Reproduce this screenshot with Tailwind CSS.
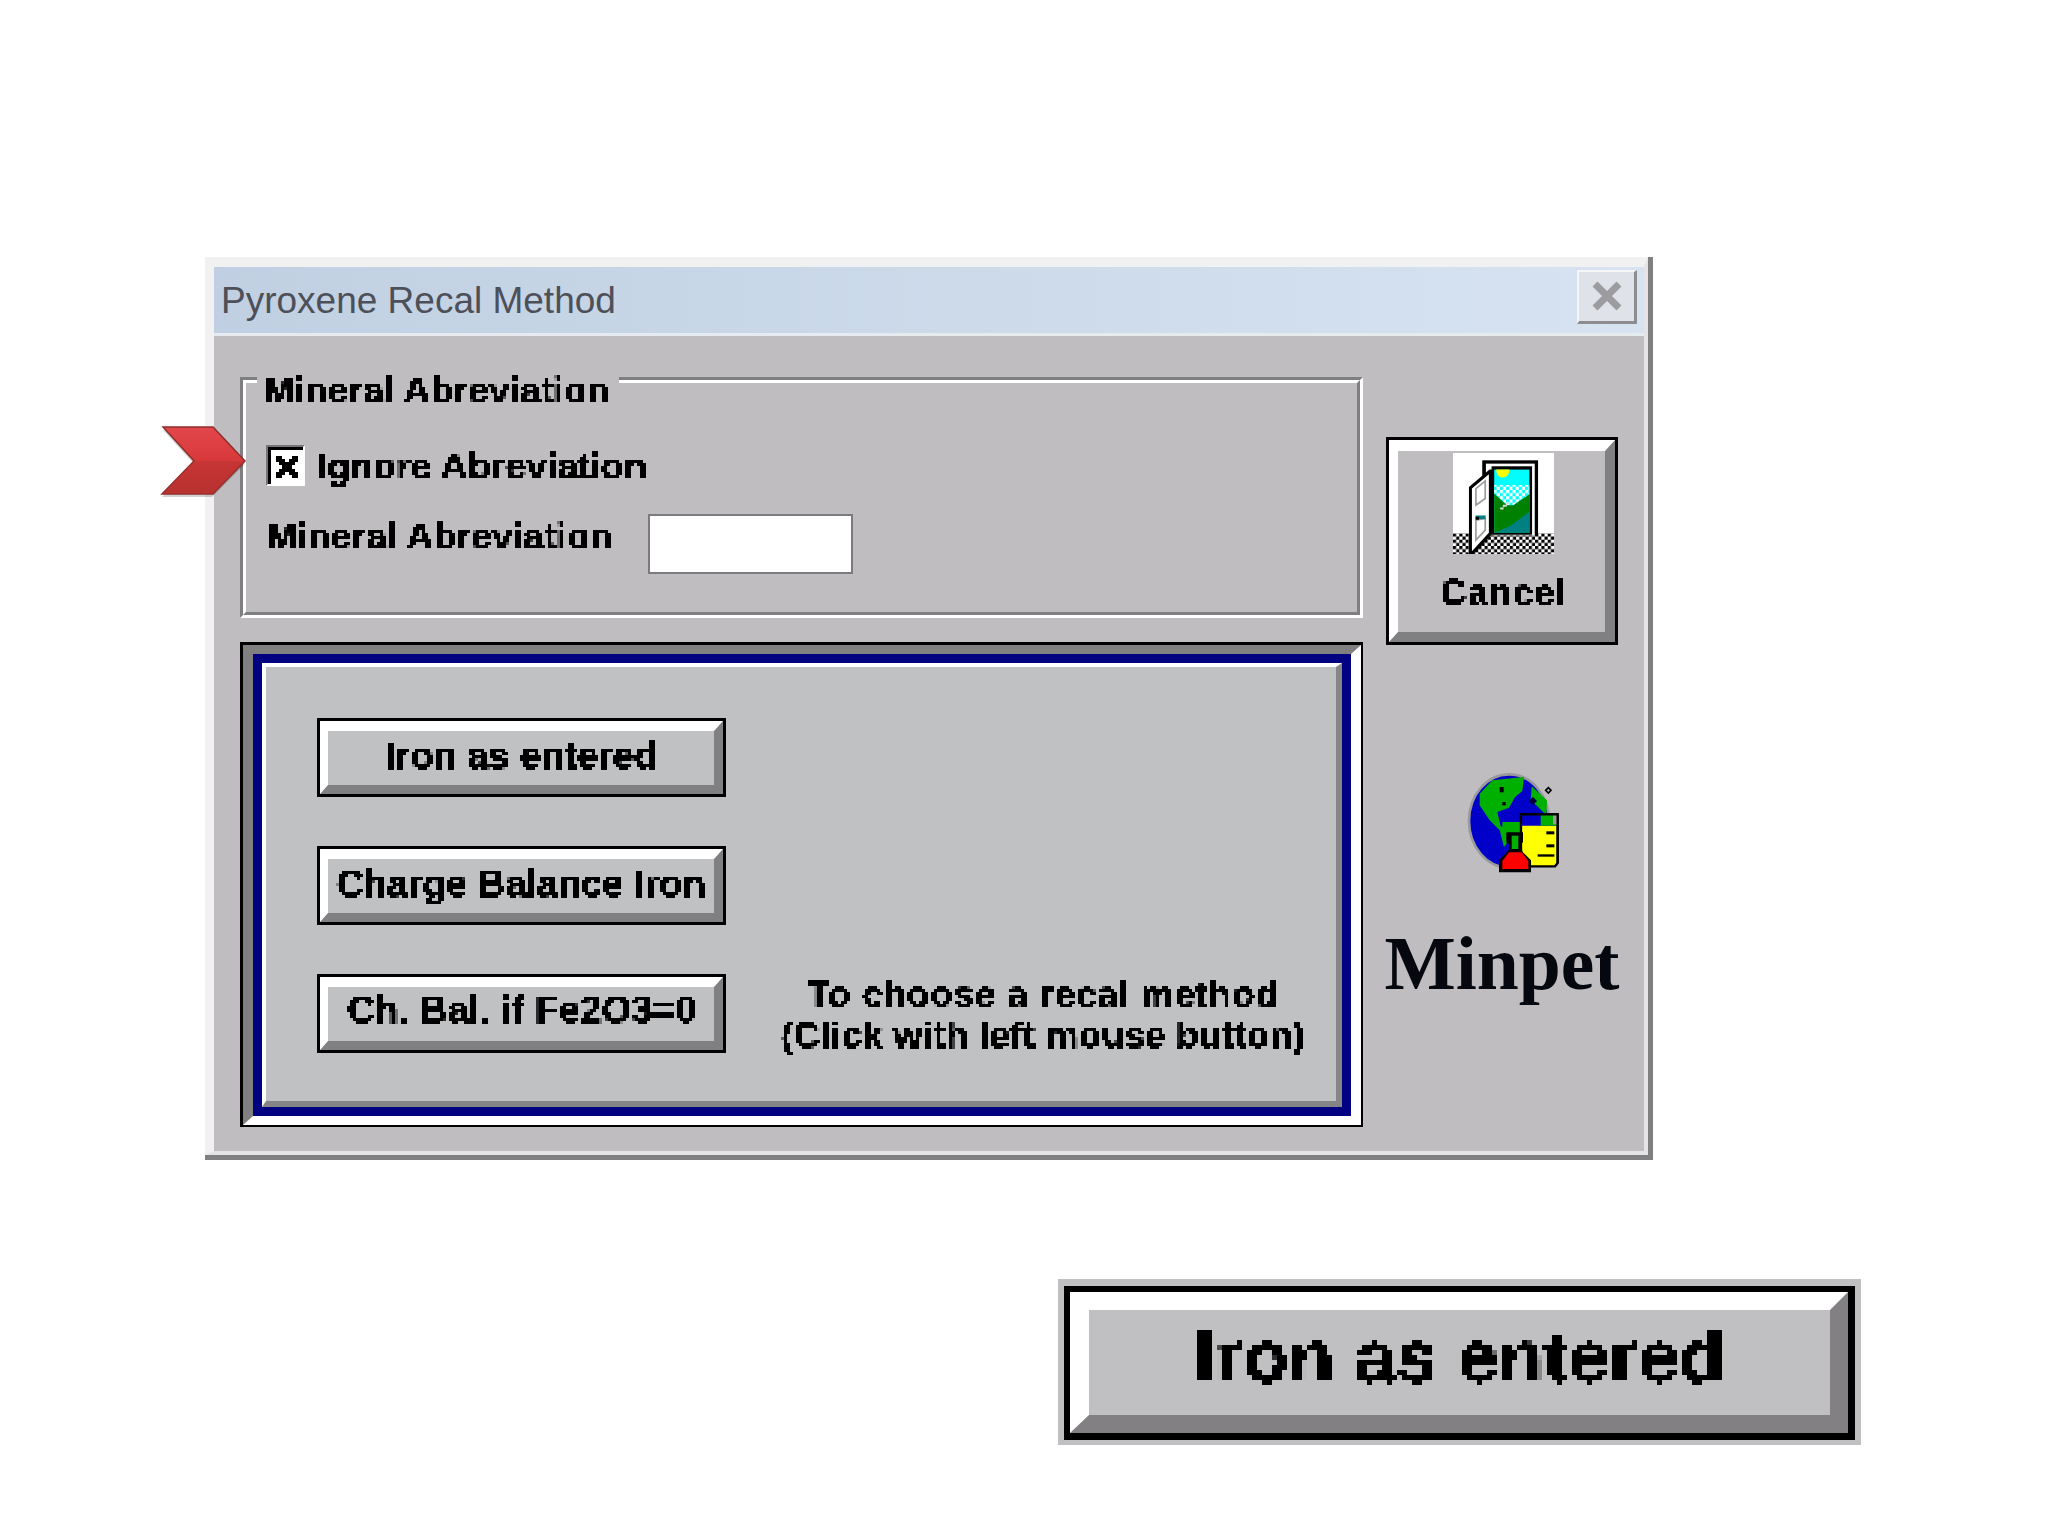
<!DOCTYPE html>
<html>
<head>
<meta charset="utf-8">
<title>Pyroxene Recal Method</title>
<script src="https://cdn.jsdelivr.net/npm/@tailwindcss/browser@4"></script>
</head>
<body class="bg-white">
<svg width="0" height="0" class="absolute">
  <defs>
    <filter id="px3" x="0" y="0" width="100%" height="100%" color-interpolation-filters="sRGB">
      <feFlood x="1" y="1" width="1" height="1" flood-color="#000"/>
      <feComposite width="3" height="3"/>
      <feTile result="a"/>
      <feComposite in="SourceGraphic" in2="a" operator="in"/>
      <feMorphology operator="dilate" radius="1"/>
      <feComponentTransfer><feFuncA type="linear" slope="8" intercept="-0.6"/></feComponentTransfer>
    </filter>
    <filter id="px5" x="0" y="0" width="100%" height="100%" color-interpolation-filters="sRGB">
      <feFlood x="2" y="2" width="1" height="1" flood-color="#000"/>
      <feComposite width="5" height="5"/>
      <feTile result="a"/>
      <feComposite in="SourceGraphic" in2="a" operator="in"/>
      <feMorphology operator="dilate" radius="2"/>
      <feComponentTransfer><feFuncA type="linear" slope="8" intercept="-0.6"/></feComponentTransfer>
    </filter>
    <pattern id="chk" x="8" y="250" width="19" height="19" patternUnits="userSpaceOnUse">
      <rect width="19" height="19" fill="#fff"/>
      <rect width="9.5" height="9.5" fill="#000"/>
      <rect x="9.5" y="9.5" width="9.5" height="9.5" fill="#000"/>
    </pattern>
    <pattern id="chk2" x="130" y="100" width="19" height="19" patternUnits="userSpaceOnUse">
      <rect width="19" height="19" fill="#00ffff"/>
      <rect width="9.5" height="9.5" fill="#fff"/>
      <rect x="9.5" y="9.5" width="9.5" height="9.5" fill="#fff"/>
    </pattern>
    <linearGradient id="red" x1="0" y1="0" x2="0" y2="1">
      <stop offset="0" stop-color="#e2474c"/>
      <stop offset="0.45" stop-color="#d93a3c"/>
      <stop offset="1" stop-color="#b8322f"/>
    </linearGradient>
  </defs>
</svg>

<div class="relative w-[2048px] h-[1536px] overflow-hidden bg-white pt-[257px] pl-[205px] font-['Liberation_Sans',sans-serif] text-black">

  <!-- window -->
  <div class="w-[1448px] h-[903px] border-r-[5px] border-b-[5px] border-[#807f82]">
    <div class="h-full flex flex-col border-t-[10px] border-l-[9px] border-t-[#f1f1f1] border-l-[#f1f1f1] border-r-4 border-b-4 border-r-[#e4e4e6] border-b-[#e4e4e6] bg-[#bfbdc0]">
      <!-- title bar -->
      <div class="h-[69px] shrink-0 flex items-center justify-between pl-[7px] pr-[7px] bg-gradient-to-r from-[#c0d0e2] to-[#d7e3f1] border-b-[3px] border-[#e6ebf0]">
        <span class="text-[37px] leading-none text-[#4d5058]">Pyroxene Recal Method</span>
        <div class="w-[60px] h-[54px] -mt-[7px] flex items-center justify-center bg-[#dfe3e9] border-t-2 border-l-2 border-t-[#f6f6f6] border-l-[#f6f6f6] border-r-[3px] border-b-[3px] border-r-[#8d8d90] border-b-[#8d8d90]">
          <svg width="32" height="32" viewBox="0 0 32 32"><path d="M4 4 L28 28 M28 4 L4 28" stroke="#9c9c9f" stroke-width="7" fill="none"/></svg>
        </div>
      </div>

      <!-- body -->
      <div class="flex-1 flex pl-[26px]">
        <!-- left column -->
        <div class="w-[1123px] shrink-0 pt-[41px] flex flex-col gap-[24px]">
          <!-- group box -->
          <div class="relative h-[241px] border-t-[3px] border-l-[3px] border-t-[#7f7e80] border-l-[#7f7e80] border-r-[3px] border-b-[3px] border-r-white border-b-white">
            <div class="h-full border-t-[3px] border-l-[3px] border-t-white border-l-white border-r-[3px] border-b-[3px] border-r-[#7f7e80] border-b-[#7f7e80] pt-[62px] pl-[20px] flex flex-col gap-[30px]">
              <div class="flex items-center h-[41px]">
                <div class="w-[39px] h-[41px] border-t-2 border-l-2 border-t-[#757477] border-l-[#757477] border-r-2 border-b-2 border-r-white border-b-white">
                  <div class="w-full h-full bg-white border-t-[3px] border-l-[3px] border-black flex items-center justify-center">
                    <svg width="26" height="26" viewBox="0 0 26 26" shape-rendering="crispEdges"><path d="M2 2h6v3h3v3h4V5h3V2h6v6h-3v3h-3v4h3v3h3v6h-6v-3h-3v-3h-4v3H8v3H2v-6h3v-3h3v-4H5V8H2z" fill="#000"/></svg>
                  </div>
                </div>
                <span class="ml-[11px] text-[37.5px] leading-none font-bold [filter:url(#px3)] px-[1px] mt-[2px]">Ignore Abreviation</span>
              </div>
              <div class="flex items-center h-[60px] -mt-[2px]">
                <span class="w-[382px] text-[37.5px] leading-none font-bold -mt-[15px] [filter:url(#px3)]">Mineral Abreviation</span>
                <div class="w-[205px] h-[60px] bg-white border-2 border-[#7b7a7d]"></div>
              </div>
            </div>
            <div class="absolute left-[14px] -top-[9px] w-[362px] h-[40px] bg-[#bfbdc0] pl-[6px] flex items-center">
              <span class="text-[37.5px] leading-none font-bold [filter:url(#px3)]">Mineral Abreviation</span>
            </div>
          </div>

          <!-- recalculation panel -->
          <div class="border-t-[3px] border-l-[3px] border-r-2 border-b-2 border-black">
            <div class="border-t-[9px] border-l-[10px] border-t-[#808080] border-l-[#808080] border-r-[10px] border-b-[9px] border-r-white border-b-white">
              <div class="border-[9px] border-[#000080]">
                <div class="border-t-4 border-l-4 border-t-white border-l-white border-r-[6px] border-b-[6px] border-r-[#858587] border-b-[#858587] bg-[#c0c1c3] pt-[51px] pl-[51px] pb-[46px] flex">
                  <div class="w-[409px] shrink-0 flex flex-col gap-[49px] pb-[2px]">
                    <div class="h-[79px] border-[3px] border-black">
                      <div class="h-full border-t-[10px] border-l-[8px] border-t-white border-l-white border-r-[9px] border-b-[9px] border-r-[#808083] border-b-[#808083] flex items-center justify-center">
                        <span class="text-[38px] leading-none font-bold -mt-[4px] [filter:url(#px3)]">Iron as entered</span>
                      </div>
                    </div>
                    <div class="h-[79px] border-[3px] border-black">
                      <div class="h-full border-t-[10px] border-l-[8px] border-t-white border-l-white border-r-[9px] border-b-[9px] border-r-[#808083] border-b-[#808083] flex items-center justify-center">
                        <span class="text-[38px] leading-none font-bold whitespace-nowrap -mt-[5px] [filter:url(#px3)]">Charge Balance Iron</span>
                      </div>
                    </div>
                    <div class="h-[79px] border-[3px] border-black">
                      <div class="h-full border-t-[10px] border-l-[8px] border-t-white border-l-white border-r-[9px] border-b-[9px] border-r-[#808083] border-b-[#808083] flex items-center justify-center">
                        <span class="text-[38.5px] leading-none font-bold whitespace-nowrap -mt-[8px] ml-[2px] [filter:url(#px3)]">Ch. Bal. if Fe2O3=0</span>
                      </div>
                    </div>
                  </div>
                  <div class="flex-1 flex items-end justify-center pl-[24px]">
                    <div class="text-center text-[37px] leading-[41px] font-bold whitespace-nowrap -mb-[1px] [filter:url(#px3)]">
                      <div class="tracking-[0.75px]">To choose a recal method</div>
                      <div class="tracking-[0.2px]">(Click with left mouse button)</div>
                    </div>
                  </div>
                </div>
              </div>
            </div>
          </div>
        </div>

        <!-- right column -->
        <div class="ml-[23px] w-[232px] shrink-0 flex flex-col items-center pt-[101px]">
          <div class="w-[232px] h-[208px] border-[3px] border-black">
            <div class="h-full border-t-[11px] border-l-[9px] border-t-white border-l-white border-r-[10px] border-b-[10px] border-r-[#808083] border-b-[#808083] flex flex-col items-center">
              <svg class="ml-[3px] shrink-0 mt-[2px]" width="101" height="101" viewBox="8 8 304 304">
                <rect x="8" y="8" width="304" height="304" fill="#fff"/>
                <rect x="8" y="250" width="304" height="62" fill="url(#chk)"/>
                <rect x="96" y="30" width="168" height="226" fill="#000"/>
                <rect x="107" y="40" width="147" height="216" fill="#fff"/>
                <rect x="124" y="48" width="122" height="206" fill="#000"/>
                <rect x="132" y="58" width="106" height="190" fill="#00ffff"/>
                <path d="M138 58a20 24 0 0 0 40 0z" fill="#ffff00"/>
                <path d="M132 104H238V132L190 165H170L132 130z" fill="url(#chk2)"/>
                <path d="M132 130L170 165H190L238 132V248H132z" fill="#008000"/>
                <path d="M132 248L180 228L238 185V248z" fill="#008080"/>
                <path d="M150 172h8v-8h10v-8h12v6h-10v8h-10v8h-10z" fill="#d8d8d8"/>
                <path d="M56 110L118 58H126V252L66 316H56z" fill="#000"/>
                <path d="M65 115L116 72V248L65 304z" fill="#fff"/>
                <path d="M77 115L105 92V145L77 165zM77 210L105 205V240L77 270z" fill="none" stroke="#9a9a9a" stroke-width="5"/>
                <rect x="76" y="196" width="30" height="11" fill="#008080"/>
                <rect x="76" y="200" width="10" height="9" fill="#000"/>
              </svg>
              <span class="mt-[21px] ml-[5px] text-[36px] leading-none font-bold [filter:url(#px3)] tracking-[1.5px]">Cancel</span>
            </div>
          </div>

          <svg class="mt-[122px] ml-[24px] shrink-0" width="110" height="110" viewBox="0 0 330 330">
            <ellipse cx="150" cy="162" rx="120" ry="140" fill="#0000c8" stroke="#9a9a9c" stroke-width="8"/>
            <path d="M62 80L100 40L195 30L190 72L168 90L150 122L115 135L125 178L172 190L135 240L122 190L92 160L62 115z" fill="#00b000"/>
            <path d="M218 58L264 100L262 145L215 98z" fill="#00b000"/>
            <path d="M130 165H185V205H130z" fill="#00b000"/>
            <rect x="122" y="60" width="12" height="16" fill="#000"/>
            <rect x="130" y="105" width="10" height="10" fill="#000"/>
            <path d="M222 90l12 12-12 12-12-12z" fill="#000040"/>
            <path d="M268 62l8 8-8 8-8-8z" fill="none" stroke="#000" stroke-width="5"/>
            <path d="M186 142H296V288L288 298H200L186 250z" fill="#ffff00" stroke="#000" stroke-width="7"/>
            <path d="M186 142H296V176H186z" fill="#0000c8"/>
            <path d="M245 142H296V176H245z" fill="#00b000"/>
            <path d="M282 142h14v30h-14z" fill="#9a9a9c"/>
            <path d="M186 170V142H296V288" fill="none" stroke="#000" stroke-width="7"/>
            <rect x="262" y="193" width="24" height="9" fill="#000"/>
            <rect x="262" y="232" width="24" height="9" fill="#000"/>
            <rect x="236" y="262" width="50" height="7" fill="#000"/>
            <path d="M142 196H192V226L184 232V248L216 280V316H120V280L150 248V232L142 226z" fill="#000"/>
            <path d="M158 206H178V246H158z" fill="#00b000"/>
            <path d="M150 256H188L208 282V306H130V282z" fill="#ff0000"/>
          </svg>

          <span class="mt-[49px] text-[75.5px] leading-none font-bold font-['Liberation_Serif',serif] text-[#06080f]">Minpet</span>
        </div>
      </div>
    </div>
  </div>

  <!-- enlarged button -->
  <div class="mt-[119px] ml-[853px] w-[803px] h-[166px] bg-[#c0bfc1] pt-[7px] pl-[6px] pr-[6px] pb-[5px]">
    <div class="h-full border-t-[6px] border-l-[6px] border-r-[7px] border-b-[7px] border-black">
      <div class="h-full border-t-[18px] border-l-[19px] border-t-white border-l-white border-r-[18px] border-b-[18px] border-r-[#828083] border-b-[#828083] flex items-center justify-center">
        <span class="text-[74px] leading-none font-bold -mt-[12px] [filter:url(#px5)] px-[2px]">Iron as entered</span>
      </div>
    </div>
  </div>

  <!-- red pointer -->
  <svg class="absolute left-[155px] top-[420px]" width="100" height="90" viewBox="155 420 100 90">
    <path d="M162 497H212L245 464L214 430H163L194 464z" fill="#000" opacity="0.18"/>
    <path d="M163 427H213L245 461L213 494H162L194 461z" fill="url(#red)" stroke="#8e2f2c" stroke-width="1.5"/>
    <path d="M194 461L245 461L213 494H162z" fill="#b5302f" opacity="0.45"/>
  </svg>
</div>
</body>
</html>
